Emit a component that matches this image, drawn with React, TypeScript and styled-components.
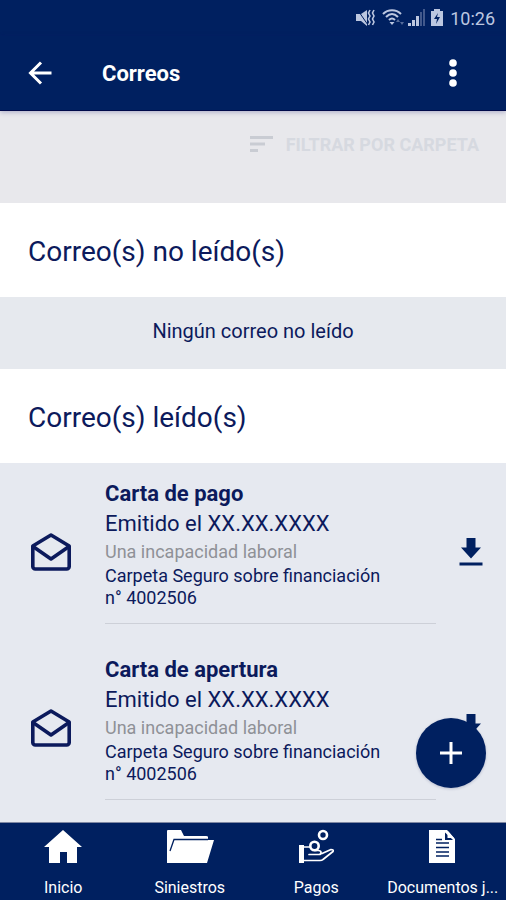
import React from "react";
import styled, { createGlobalStyle } from "styled-components";

const navy = "#002060";
const ink = "#0c1a5c";

const GlobalStyle = createGlobalStyle`
  *, *::before, *::after { box-sizing: border-box; }
  body {
    margin: 0;
    background: #e6e9f0;
    font-family: Roboto, "Liberation Sans", sans-serif;
    color: ${ink};
  }
  button { font: inherit; border: 0; padding: 0; background: none; color: inherit; cursor: pointer; }
  svg { display: block; flex: none; }
`;

const Screen = styled.div`
  height: 100vh;
  display: flex;
  flex-direction: column;
  overflow: hidden;
`;

const StatusBar = styled.div`
  flex: none;
  height: 36px;
  padding-right: 11px;
  display: flex;
  align-items: center;
  justify-content: flex-end;
  gap: 6px;
  background: ${navy};
  color: #bcc7e0;
  font-size: 18px;
`;

const AppBar = styled.header`
  flex: none;
  z-index: 1;
  height: 75px;
  padding: 0 33px 0 20px;
  display: flex;
  align-items: center;
  background: ${navy};
  color: #fff;
  border-bottom: 1px solid #000a4a;
  box-shadow: 0 1px 5px rgba(20, 20, 110, 0.3);
`;

const IconButton = styled.button`
  display: grid;
  place-items: center;
  width: 40px;
  height: 40px;
`;

const Title = styled.h1`
  flex: 1;
  margin: 0 0 0 42px;
  font-size: 22px;
  font-weight: 700;
`;

const Content = styled.main`
  flex: 1;
  min-height: 0;
  overflow: hidden;
`;

const FilterBar = styled.div`
  height: 92px;
  padding: 20px 27px 0;
  display: flex;
  justify-content: flex-end;
  align-items: flex-start;
  background: #e8e8ec;
`;

const FilterButton = styled.button`
  display: flex;
  align-items: center;
  gap: 13px;
  height: 26px;
  font-size: 18px;
  font-weight: 700;
  color: #d6d9e0;
`;

const SectionTitle = styled.h2`
  margin: 0;
  height: 94px;
  padding: 2px 28px 0;
  display: flex;
  align-items: center;
  background: #fff;
  font-size: 28px;
  font-weight: 400;
`;

const Empty = styled.p`
  margin: 0;
  height: 72px;
  padding-bottom: 4px;
  display: grid;
  place-items: center;
  background: #e6e9ee;
  font-size: 20px;
`;

const MailList = styled.ul`
  margin: 0;
  padding: 0;
  list-style: none;
`;

const MailItem = styled.li`
  display: grid;
  grid-template-columns: 105px 1fr 70px;
  padding-bottom: 15px;
`;

const MailIcon = styled.div`
  padding: 69px 0 0 30px;
`;

const MailBody = styled.div`
  padding: 16px 0 14px;
  border-bottom: 1px solid #cdd0d8;
`;

const MailTitle = styled.h3`
  margin: 0;
  font-size: 22px;
  line-height: 30px;
  font-weight: 700;
`;

const MailDate = styled.p`
  margin: 0;
  font-size: 22px;
  line-height: 30px;
`;

const MailKind = styled.p`
  margin: 0;
  font-size: 18px;
  line-height: 26px;
  color: #8f9197;
`;

const MailFolder = styled.p`
  margin: 0;
  font-size: 18px;
  line-height: 22px;
`;

const DownloadButton = styled(IconButton)`
  margin: 69px 0 0 15px;
`;

const BottomArea = styled.div`
  flex: none;
  position: relative;
`;

const Fab = styled.button`
  position: absolute;
  right: 20px;
  bottom: calc(100% + 34px);
  width: 70px;
  height: 70px;
  border-radius: 50%;
  display: grid;
  place-items: center;
  background: ${navy};
  box-shadow: 0 1px 3px rgba(0, 20, 80, 0.2);
`;

const BottomNav = styled.nav`
  height: 78px;
  display: grid;
  grid-template-columns: repeat(4, minmax(0, 1fr));
  background: ${navy};
  border-top: 1px solid #7f88a3;
`;

const NavLink = styled.a`
  display: flex;
  flex-direction: column;
  align-items: center;
  padding-top: 6px;
  gap: 14px;
  color: #fff;
  text-decoration: none;
  font-size: 16px;
  line-height: 20px;
  white-space: nowrap;
`;

const StatusIcons = () => (
  <svg width="88" height="20" viewBox="0 0 88 20" fill="currentColor" aria-hidden="true">
    <path d="M0 6h5l6-4v16l-6-5H0z" />
    <path d="M1 1l11 16" stroke={navy} strokeWidth="1" />
    <path d="M14 2l-1.500 3 1.500 3-1.500 3 1.500 3-1.500 3M18 2l-1.500 3 1.500 3-1.500 3 1.500 3-1.500 3" fill="none" stroke="currentColor" strokeWidth="1.600" />
    <g fill="none" stroke="currentColor" strokeWidth="2">
      <path d="M27 6c5-5 13-5 18 0M30 9c4-4 8-4 12 0M33 12c2-2 4-2 6 0" />
    </g>
    <path d="M33.500 14h5L36 17z" />
    <path d="M42 11l-2 3h4zM46 17l-2-3h4z" opacity=".45" />
    <path d="M52 15h3v3h-3zM56 12h3v6h-3zM60 8h3v10h-3z" />
    <path d="M64 4h2v14h-2zM67 1h2v17h-2z" opacity=".35" />
    <path d="M78 1h6v2h3v15H75V3h3z" />
    <path d="M82 5l-4 6h3l-1 5 4-7h-3z" fill={navy} />
  </svg>
);

const EnvelopeIcon = () => (
  <svg width="42" height="40" viewBox="0 0 42 40" fill="none" stroke={ink} strokeWidth="3.600" strokeLinejoin="round" aria-hidden="true">
    <path d="M2.800 14L21 3l18.200 11v20.500a2.500 2.500 0 0 1-2.500 2.500H5.300a2.500 2.500 0 0 1-2.500-2.500z" />
    <path d="M3 14.500l18 12.500 18-12.500" />
  </svg>
);

const DownloadIcon = () => (
  <svg width="24" height="28" viewBox="0 0 24 28" fill={navy} aria-hidden="true">
    <path d="M7.500 0h9v9.500H22L12 20.500 2 9.500h5.500zM.5 24.500h23v3H.5z" />
  </svg>
);

const HomeIcon = () => (
  <svg width="38" height="35" viewBox="0 0 38 35" fill="currentColor" aria-hidden="true">
    <path d="M19 1L38 18h-5v16H23V23h-7v11H5V18H0z" />
  </svg>
);

const FolderIcon = () => (
  <svg width="48" height="35" viewBox="0 0 48 35" aria-hidden="true">
    <path d="M1 34V2q0-1 1-1h13l3 6h22q2 0 2 1v3h6l-7 23z" fill="currentColor" />
    <path d="M4 22l4-11.500h34" fill="none" stroke={navy} strokeWidth="1.300" />
  </svg>
);

const PaymentsIcon = () => (
  <svg width="35" height="35" viewBox="0 0 35 35" fill="none" stroke="currentColor" aria-hidden="true">
    <path d="M0 16h5v18H0z" fill="currentColor" stroke="none" />
    <circle cx="24" cy="6" r="4" strokeWidth="2.600" />
    <circle cx="15.500" cy="17" r="4.200" strokeWidth="2.600" />
    <path d="M5 18h6M5 31.500h16q2 0 3-1l10-8q1-2-2-2l-9 4M10 25.500h10q2 0 2-2t-3-2h-3" strokeWidth="1.700" strokeLinecap="round" strokeLinejoin="round" />
  </svg>
);

const DocumentIcon = () => (
  <svg width="27" height="35" viewBox="0 0 27 35" aria-hidden="true">
    <path d="M0 1h18l8 9v24H0z" fill="currentColor" />
    <path d="M16 3.500v7.500h8z" fill={navy} />
    <path d="M18.500 1.500V9H25z" fill="currentColor" />
    <path d="M7 10.500h6M7 14h13M7 18.500h13M7 23h13M7 27h13" stroke={navy} strokeWidth="1.700" />
  </svg>
);

const mails = ["Carta de pago", "Carta de apertura"];

const tabs = [
  { label: "Inicio", icon: <HomeIcon /> },
  { label: "Siniestros", icon: <FolderIcon /> },
  { label: "Pagos", icon: <PaymentsIcon /> },
  { label: "Documentos j...", icon: <DocumentIcon /> },
];

export default function App() {
  return (
    <Screen>
      <GlobalStyle />
      <StatusBar>
        <StatusIcons />
        <span>10:26</span>
      </StatusBar>
      <AppBar>
        <IconButton aria-label="Volver">
          <svg width="24" height="24" viewBox="0 0 24 24" fill="none" stroke="currentColor" strokeWidth="3" aria-hidden="true">
            <path d="M23.500 12H3M13 1.500L2.500 12 13 22.500" />
          </svg>
        </IconButton>
        <Title>Correos</Title>
        <IconButton aria-label="Más opciones">
          <svg width="8" height="28" viewBox="0 0 8 28" fill="currentColor" aria-hidden="true">
            <circle cx="4" cy="4" r="3.800" />
            <circle cx="4" cy="14" r="3.800" />
            <circle cx="4" cy="24" r="3.800" />
          </svg>
        </IconButton>
      </AppBar>
      <Content>
        <FilterBar>
          <FilterButton>
            <svg width="23" height="16" viewBox="0 0 23 16" fill="#c9ccd3" aria-hidden="true">
              <path d="M0 0h23v3H0zM0 6.500h15v3H0zM0 13h8v3H0z" />
            </svg>
            FILTRAR POR CARPETA
          </FilterButton>
        </FilterBar>
        <SectionTitle>Correo(s) no leído(s)</SectionTitle>
        <Empty>Ningún correo no leído</Empty>
        <SectionTitle>Correo(s) leído(s)</SectionTitle>
        <MailList>
          {mails.map((title) => (
            <MailItem key={title}>
              <MailIcon>
                <EnvelopeIcon />
              </MailIcon>
              <MailBody>
                <MailTitle>{title}</MailTitle>
                <MailDate>Emitido el XX.XX.XXXX</MailDate>
                <MailKind>Una incapacidad laboral</MailKind>
                <MailFolder>
                  Carpeta Seguro sobre financiación
                  <br />
                  n° 4002506
                </MailFolder>
              </MailBody>
              <DownloadButton aria-label={`Descargar ${title}`}>
                <DownloadIcon />
              </DownloadButton>
            </MailItem>
          ))}
        </MailList>
      </Content>
      <BottomArea>
        <Fab aria-label="Añadir">
          <svg width="22" height="22" viewBox="0 0 22 22" stroke="#fff" strokeWidth="3" aria-hidden="true">
            <path d="M11 0v22M0 11h22" />
          </svg>
        </Fab>
        <BottomNav>
          {tabs.map((tab) => (
            <NavLink key={tab.label} href="#">
              {tab.icon}
              {tab.label}
            </NavLink>
          ))}
        </BottomNav>
      </BottomArea>
    </Screen>
  );
}
